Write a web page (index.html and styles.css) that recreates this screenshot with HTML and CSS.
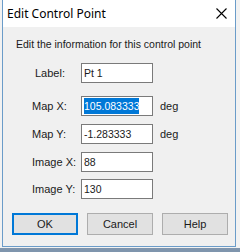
FILE: index.html
```html
<!DOCTYPE html>
<html lang="en">
<head>
    <meta charset="UTF-8">
    <title>Edit Control Point</title>
    <link rel="stylesheet" href="styles.css">
</head>
<body>

<div class="window">
    <div class="titlebar">
        <span class="title">Edit Control Point</span>
        <svg class="close" width="11" height="11" viewBox="0 0 11 11">
            <path d="M0.5 0.5 L10.5 10.5 M10.5 0.5 L0.5 10.5" stroke="#000" stroke-width="1.1" fill="none"/>
        </svg>
    </div>
    <div class="content">
        <div class="intro">Edit the information for this control point</div>

        <div class="row first">
            <span class="label label-indent">Label:</span>
            <div class="field">Pt 1</div>
        </div>

        <div class="row group">
            <span class="label">Map X:</span>
            <div class="field"><span class="selected">105.083333</span></div>
            <span class="unit">deg</span>
        </div>
        <div class="row">
            <span class="label">Map Y:</span>
            <div class="field">-1.283333</div>
            <span class="unit">deg</span>
        </div>

        <div class="row">
            <span class="label">Image X:</span>
            <div class="field">88</div>
        </div>
        <div class="row tight">
            <span class="label">Image Y:</span>
            <div class="field">130</div>
        </div>

        <div class="buttons">
            <button class="default">OK</button>
            <button>Cancel</button>
            <button>Help</button>
        </div>
    </div>
</div>

</body>
</html>
```

FILE: styles.css
```css
body {
    margin: 0;
    width: 240px;
    height: 252px;
    overflow: hidden;
    background: linear-gradient(to bottom, #f2f2f2 0, #f2f2f2 248px, #7f95ad 248px);
    font-family: 'Liberation Sans', Arial, sans-serif;
    font-size: 11px;
    color: #1a1a1a;
}

.window {
    margin-left: 2px;
    width: 232px;
    height: 246px;
    border: 1px solid #6b9cc9;
    border-top: none;
    background-color: #f0f0f0;
}

.titlebar {
    height: 27px;
    background-color: #fff;
    display: flex;
    align-items: center;
    justify-content: space-between;
    padding: 0 8px 0 4px;
}

.title {
    font-family: 'Noto Sans', 'Open Sans', sans-serif;
    font-size: 12px;
    margin-top: -1px;
    color: #000;
}

.close {
    margin-top: -1px;
}

.content {
    padding: 10px 0 0 13px;
}

.intro {
    line-height: 14px;
    font-size: 10.5px;
}

.row {
    display: flex;
    align-items: center;
    height: 20px;
    margin-top: 8px;
}

.row.first {
    margin-top: 12px;
}

.row.group {
    margin-top: 13px;
}

.row.tight {
    margin-top: 7px;
}

.label {
    width: 65px;
    padding-left: 16px;
    box-sizing: border-box;
    white-space: nowrap;
}

.label-indent {
    padding-left: 19px;
}

.field {
    width: 72px;
    height: 20px;
    box-sizing: border-box;
    border: 1px solid #7a7a7a;
    background-color: #fff;
    padding-left: 2px;
    line-height: 18px;
    font-size: 10.5px;
    white-space: nowrap;
    overflow: hidden;
}

.selected {
    background-color: #0078d7;
    color: #fff;
    padding: 2px 0;
}

.unit {
    margin-left: 7px;
}

.buttons {
    display: flex;
    gap: 9px;
    margin: 14px 0 0 -4px;
}

button {
    width: 66px;
    height: 22px;
    background-color: #e1e1e1;
    border: 1px solid #adadad;
    font-family: 'Liberation Sans', Arial, sans-serif;
    font-size: 11px;
    color: #1a1a1a;
    padding: 0;
}

button.default {
    border: 2px solid #0078d7;
}
```
